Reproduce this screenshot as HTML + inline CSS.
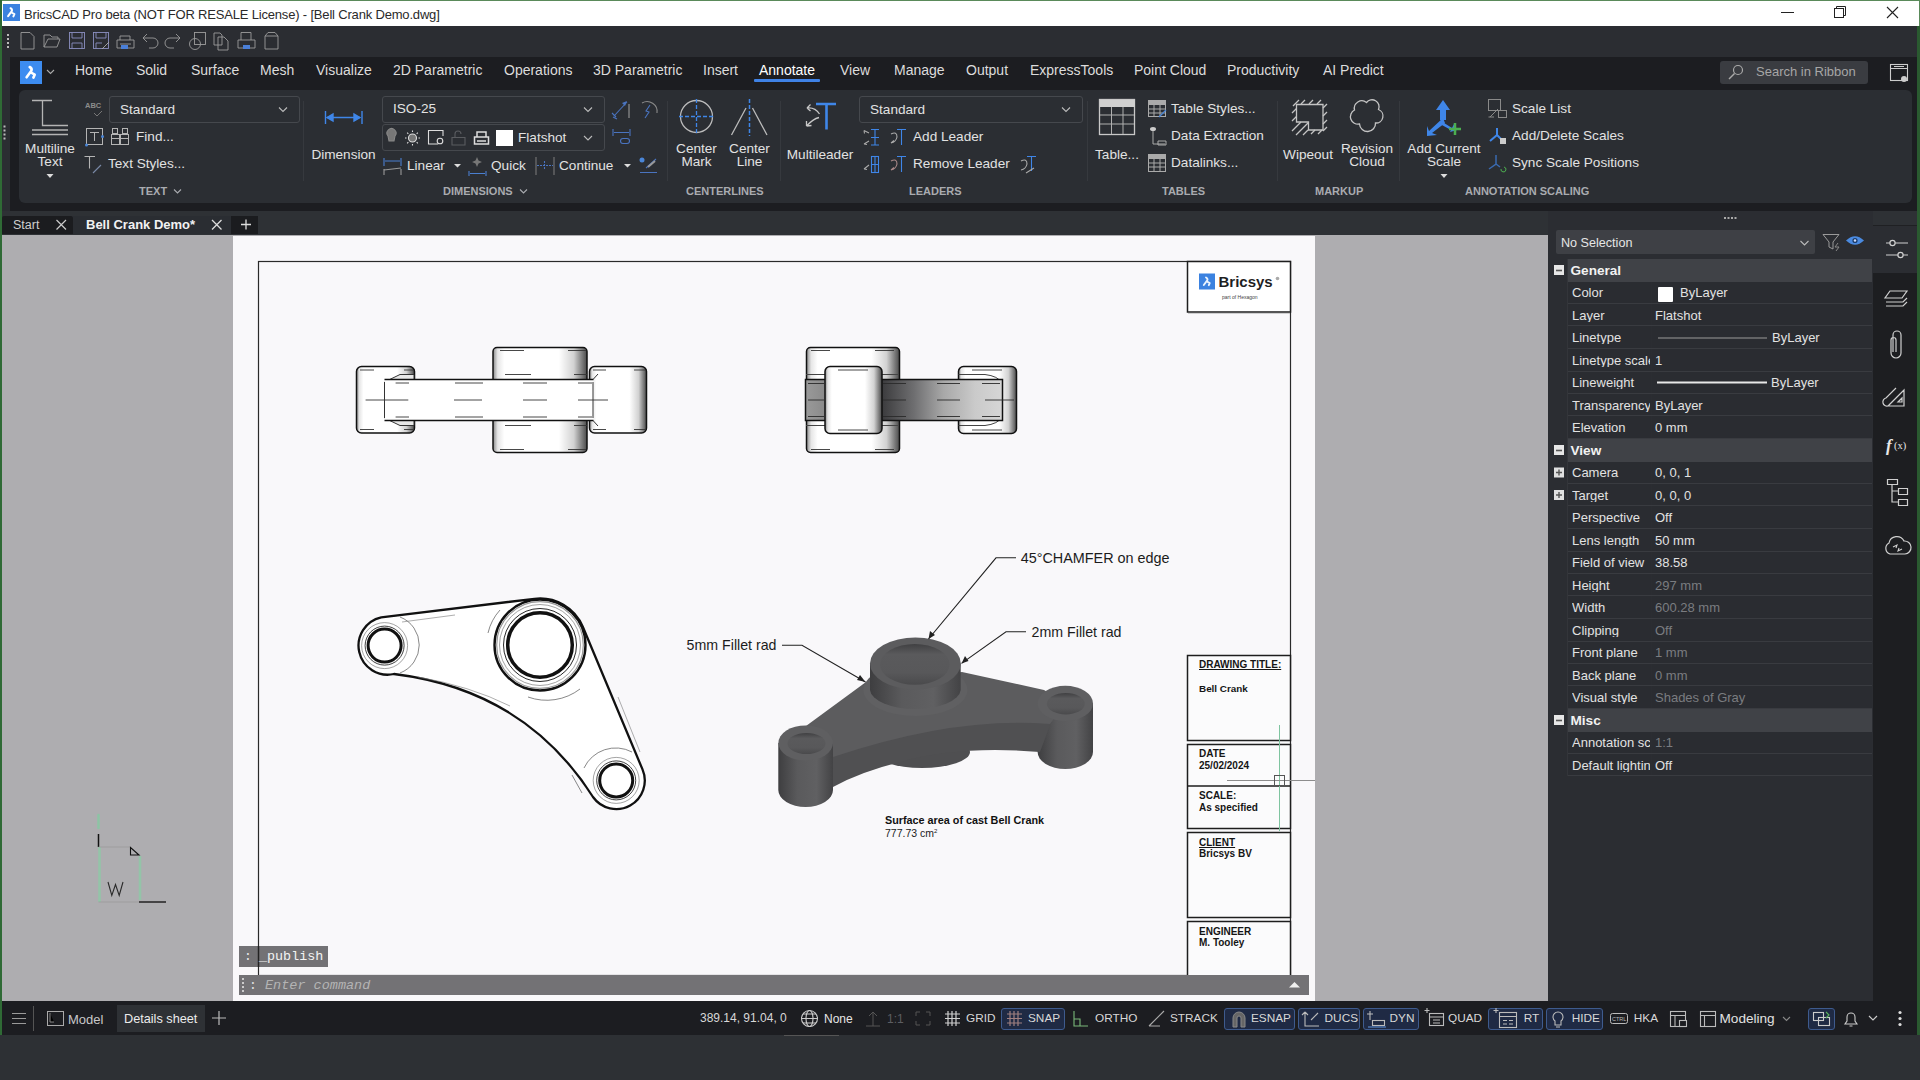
<!DOCTYPE html>
<html><head><meta charset="utf-8">
<style>
*{margin:0;padding:0;box-sizing:border-box}
html,body{width:1920px;height:1080px;overflow:hidden;background:#2b2e32;font-family:"Liberation Sans",sans-serif;color:#e6e6e6}
.a{position:absolute}
.t{position:absolute;white-space:nowrap;line-height:1}
svg{position:absolute;left:0;top:0}
</style></head><body>
<div class="a" style="left:0px;top:0px;width:1920px;height:26px;background:#ffffff;"></div>
<div class="a" style="left:0px;top:0px;width:1920px;height:1px;background:#5a8a5a;"></div>
<div class="a" style="left:0px;top:26px;width:1920px;height:31px;background:#2b2d32;"></div>
<div class="a" style="left:10px;top:57px;width:1910px;height:154px;background:#1c1d21;"></div>
<div class="a" style="left:0px;top:57px;width:10px;height:154px;background:#2b2d32;"></div>
<div class="a" style="left:19px;top:90px;width:1893px;height:113px;background:#2b2e33;border-radius:6px"></div>
<div class="a" style="left:0px;top:211px;width:1920px;height:24px;background:#2e3135;"></div>
<div class="a" style="left:0px;top:235px;width:1548px;height:766px;background:#aeadb0;"></div>
<div class="a" style="left:233px;top:236px;width:1082px;height:765px;background:#f9f8fa;"></div>
<div class="a" style="left:1548px;top:235px;width:327px;height:766px;background:#2b2d32;"></div>
<div class="a" style="left:1875px;top:273px;width:45px;height:728px;background:#1f2124;"></div>
<div class="a" style="left:0px;top:1001px;width:1920px;height:34px;background:#1c1d21;"></div>
<div class="a" style="left:0px;top:1035px;width:1920px;height:45px;background:#2d3034;"></div>
<div class="a" style="left:0px;top:0px;width:2px;height:1035px;background:#2f6a35;"></div>
<div class="a" style="left:20px;top:61px;width:22px;height:23px;background:#3d8cf0;"></div>
<div class="a" style="left:754px;top:79px;width:66px;height:3px;background:#3f82e6;border-radius:1px"></div>
<div class="a" style="left:1720px;top:61px;width:148px;height:23px;background:#3a3c41;border-radius:3px"></div>
<div class="a" style="left:303px;top:101px;width:1px;height:80px;background:#36393e;"></div>
<div class="a" style="left:667px;top:101px;width:1px;height:80px;background:#36393e;"></div>
<div class="a" style="left:780px;top:101px;width:1px;height:80px;background:#36393e;"></div>
<div class="a" style="left:1087px;top:101px;width:1px;height:80px;background:#36393e;"></div>
<div class="a" style="left:1277px;top:101px;width:1px;height:80px;background:#36393e;"></div>
<div class="a" style="left:1399px;top:101px;width:1px;height:80px;background:#36393e;"></div>
<div class="a" style="left:109px;top:96px;width:191px;height:27px;background:transparent;border:1px solid #45484d;border-radius:3px"></div>
<div class="a" style="left:382px;top:96px;width:223px;height:27px;background:transparent;border:1px solid #45484d;border-radius:3px"></div>
<div class="a" style="left:382px;top:124px;width:223px;height:27px;background:transparent;border:1px solid #45484d;border-radius:3px"></div>
<div class="a" style="left:496px;top:130px;width:17px;height:16px;background:#ffffff;"></div>
<div class="a" style="left:859px;top:96px;width:224px;height:27px;background:transparent;border:1px solid #45484d;border-radius:3px"></div>
<div class="a" style="left:2px;top:216px;width:71px;height:18px;background:#1b1c1f;border-radius:2px 2px 0 0"></div>
<div class="a" style="left:73px;top:216px;width:158px;height:18px;background:#2a2d32;"></div>
<div class="a" style="left:231px;top:216px;width:27px;height:18px;background:#1b1c1f;"></div>
<div class="a" style="left:239px;top:946px;width:89px;height:21px;background:#737275;"></div>
<div class="a" style="left:1548px;top:211px;width:325px;height:790px;background:#2b2d32;"></div>
<div class="a" style="left:1873px;top:211px;width:45px;height:62px;background:#2b2d32;"></div>
<div class="a" style="left:1873px;top:225px;width:45px;height:1px;background:#1f2023;"></div>
<div class="a" style="left:1873px;top:211px;width:45px;height:14px;background:#2e3135;"></div>
<div class="a" style="left:1873px;top:273px;width:45px;height:728px;background:#1d1e21;"></div>
<div class="a" style="left:1919px;top:0px;width:1px;height:26px;background:#5a8a5a;"></div>
<div class="a" style="left:1917px;top:26px;width:3px;height:1009px;background:#2a5a30;"></div>
<div class="a" style="left:1556px;top:230px;width:259px;height:24px;background:#3e4045;border-radius:2px"></div>
<div class="a" style="left:1567px;top:259px;width:305px;height:23px;background:#404247;"></div>
<div class="a" style="left:1567px;top:282px;width:84px;height:21px;background:#2a2c31;"></div>
<div class="a" style="left:1652px;top:282px;width:220px;height:21px;background:#2a2c31;"></div>
<div class="a" style="left:1567px;top:303px;width:305px;height:1px;background:#393b40;"></div>
<div class="a" style="left:1658px;top:287px;width:15px;height:15px;background:#ffffff;border-radius:1px"></div>
<div class="a" style="left:1567px;top:304px;width:84px;height:21px;background:#2a2c31;"></div>
<div class="a" style="left:1652px;top:304px;width:220px;height:21px;background:#2a2c31;"></div>
<div class="a" style="left:1567px;top:325px;width:305px;height:1px;background:#393b40;"></div>
<div class="a" style="left:1567px;top:326px;width:84px;height:22px;background:#2a2c31;"></div>
<div class="a" style="left:1652px;top:326px;width:220px;height:22px;background:#2a2c31;"></div>
<div class="a" style="left:1567px;top:348px;width:305px;height:1px;background:#393b40;"></div>
<div class="a" style="left:1567px;top:349px;width:84px;height:22px;background:#2a2c31;"></div>
<div class="a" style="left:1652px;top:349px;width:220px;height:22px;background:#2a2c31;"></div>
<div class="a" style="left:1567px;top:371px;width:305px;height:1px;background:#393b40;"></div>
<div class="a" style="left:1567px;top:372px;width:84px;height:21px;background:#2a2c31;"></div>
<div class="a" style="left:1652px;top:372px;width:220px;height:21px;background:#2a2c31;"></div>
<div class="a" style="left:1567px;top:393px;width:305px;height:1px;background:#393b40;"></div>
<div class="a" style="left:1567px;top:394px;width:84px;height:21px;background:#2a2c31;"></div>
<div class="a" style="left:1652px;top:394px;width:220px;height:21px;background:#2a2c31;"></div>
<div class="a" style="left:1567px;top:415px;width:305px;height:1px;background:#393b40;"></div>
<div class="a" style="left:1567px;top:416px;width:84px;height:22px;background:#2a2c31;"></div>
<div class="a" style="left:1652px;top:416px;width:220px;height:22px;background:#2a2c31;"></div>
<div class="a" style="left:1567px;top:438px;width:305px;height:1px;background:#393b40;"></div>
<div class="a" style="left:1567px;top:439px;width:305px;height:23px;background:#404247;"></div>
<div class="a" style="left:1567px;top:462px;width:84px;height:21px;background:#2a2c31;"></div>
<div class="a" style="left:1652px;top:462px;width:220px;height:21px;background:#2a2c31;"></div>
<div class="a" style="left:1567px;top:483px;width:305px;height:1px;background:#393b40;"></div>
<div class="a" style="left:1567px;top:484px;width:84px;height:21px;background:#2a2c31;"></div>
<div class="a" style="left:1652px;top:484px;width:220px;height:21px;background:#2a2c31;"></div>
<div class="a" style="left:1567px;top:505px;width:305px;height:1px;background:#393b40;"></div>
<div class="a" style="left:1567px;top:506px;width:84px;height:22px;background:#2a2c31;"></div>
<div class="a" style="left:1652px;top:506px;width:220px;height:22px;background:#2a2c31;"></div>
<div class="a" style="left:1567px;top:528px;width:305px;height:1px;background:#393b40;"></div>
<div class="a" style="left:1567px;top:529px;width:84px;height:22px;background:#2a2c31;"></div>
<div class="a" style="left:1652px;top:529px;width:220px;height:22px;background:#2a2c31;"></div>
<div class="a" style="left:1567px;top:551px;width:305px;height:1px;background:#393b40;"></div>
<div class="a" style="left:1567px;top:552px;width:84px;height:21px;background:#2a2c31;"></div>
<div class="a" style="left:1652px;top:552px;width:220px;height:21px;background:#2a2c31;"></div>
<div class="a" style="left:1567px;top:573px;width:305px;height:1px;background:#393b40;"></div>
<div class="a" style="left:1567px;top:574px;width:84px;height:21px;background:#2a2c31;"></div>
<div class="a" style="left:1652px;top:574px;width:220px;height:21px;background:#2a2c31;"></div>
<div class="a" style="left:1567px;top:595px;width:305px;height:1px;background:#393b40;"></div>
<div class="a" style="left:1567px;top:596px;width:84px;height:22px;background:#2a2c31;"></div>
<div class="a" style="left:1652px;top:596px;width:220px;height:22px;background:#2a2c31;"></div>
<div class="a" style="left:1567px;top:618px;width:305px;height:1px;background:#393b40;"></div>
<div class="a" style="left:1567px;top:619px;width:84px;height:22px;background:#2a2c31;"></div>
<div class="a" style="left:1652px;top:619px;width:220px;height:22px;background:#2a2c31;"></div>
<div class="a" style="left:1567px;top:641px;width:305px;height:1px;background:#393b40;"></div>
<div class="a" style="left:1567px;top:642px;width:84px;height:21px;background:#2a2c31;"></div>
<div class="a" style="left:1652px;top:642px;width:220px;height:21px;background:#2a2c31;"></div>
<div class="a" style="left:1567px;top:663px;width:305px;height:1px;background:#393b40;"></div>
<div class="a" style="left:1567px;top:664px;width:84px;height:21px;background:#2a2c31;"></div>
<div class="a" style="left:1652px;top:664px;width:220px;height:21px;background:#2a2c31;"></div>
<div class="a" style="left:1567px;top:685px;width:305px;height:1px;background:#393b40;"></div>
<div class="a" style="left:1567px;top:686px;width:84px;height:22px;background:#2a2c31;"></div>
<div class="a" style="left:1652px;top:686px;width:220px;height:22px;background:#2a2c31;"></div>
<div class="a" style="left:1567px;top:708px;width:305px;height:1px;background:#393b40;"></div>
<div class="a" style="left:1567px;top:709px;width:305px;height:23px;background:#404247;"></div>
<div class="a" style="left:1567px;top:732px;width:84px;height:21px;background:#2a2c31;"></div>
<div class="a" style="left:1652px;top:732px;width:220px;height:21px;background:#2a2c31;"></div>
<div class="a" style="left:1567px;top:753px;width:305px;height:1px;background:#393b40;"></div>
<div class="a" style="left:1567px;top:754px;width:84px;height:21px;background:#2a2c31;"></div>
<div class="a" style="left:1652px;top:754px;width:220px;height:21px;background:#2a2c31;"></div>
<div class="a" style="left:1567px;top:775px;width:305px;height:1px;background:#393b40;"></div>
<div class="a" style="left:1567px;top:259px;width:1px;height:517px;background:#33353a;"></div>
<div class="a" style="left:117px;top:1005px;width:88px;height:27px;background:#2e3135;"></div>
<div class="a" style="left:784px;top:1035px;width:55px;height:1px;background:#555;"></div>
<div class="a" style="left:1001px;top:1008px;width:64px;height:22px;background:#1f2a44;border:1px solid #3e5b8e;border-radius:3px"></div>
<div class="a" style="left:1224px;top:1008px;width:71px;height:22px;background:#1f2a44;border:1px solid #3e5b8e;border-radius:3px"></div>
<div class="a" style="left:1298px;top:1008px;width:62px;height:22px;background:#1f2a44;border:1px solid #3e5b8e;border-radius:3px"></div>
<div class="a" style="left:1363px;top:1008px;width:56px;height:22px;background:#1f2a44;border:1px solid #3e5b8e;border-radius:3px"></div>
<div class="a" style="left:1488px;top:1008px;width:55px;height:22px;background:#1f2a44;border:1px solid #3e5b8e;border-radius:3px"></div>
<div class="a" style="left:1546px;top:1008px;width:57px;height:22px;background:#1f2a44;border:1px solid #3e5b8e;border-radius:3px"></div>
<div class="a" style="left:1808px;top:1008px;width:27px;height:22px;background:#1f2a44;border:1px solid #3e5b8e;border-radius:3px"></div>
<svg width="1920" height="1080" viewBox="0 0 1920 1080">
<rect x="3" y="4" width="17" height="17" fill="#3b82e0"/>
<path d="M10.5 8.2 Q12.5 9.3 11.8 11.1 L8.1 16.2 M11.5 12.5 L14.4 14.2 L13.4 16.4" stroke="#fff" stroke-width="2.0" stroke-linecap="round" stroke-linejoin="round" fill="none"/>
<path d="M1781 12.5 H1794" stroke="#222" stroke-width="1"/>
<rect x="1834.5" y="8.5" width="9" height="9" fill="none" stroke="#222"/><path d="M1836.5 8.5 V6.5 H1845.5 V15.5 H1843.5" fill="none" stroke="#222"/>
<path d="M1887 7 L1898 18 M1898 7 L1887 18" stroke="#222" stroke-width="1.1"/>
<rect x="3.5" y="125.5" width="2" height="2" fill="#bbb"/>
<rect x="3.5" y="129.5" width="2" height="2" fill="#bbb"/>
<rect x="3.5" y="133.5" width="2" height="2" fill="#bbb"/>
<rect x="3.5" y="137.5" width="2" height="2" fill="#bbb"/>
<rect x="7" y="34" width="2" height="2" fill="#bbb"/>
<rect x="7" y="38" width="2" height="2" fill="#bbb"/>
<rect x="7" y="42" width="2" height="2" fill="#bbb"/>
<rect x="7" y="46" width="2" height="2" fill="#bbb"/>
<g fill="none" stroke="#9c9c9c" stroke-width="0.9"><path d="M21 32.5 H30 L34 36.5 V49 H21 Z"/><path d="M44 35 H50 L52 37 H58 V39 M44 35 V47 H57 L60 39 H48 L44 47"/><rect x="69.5" y="32.5" width="15" height="16" stroke="#8a8fc0"/><path d="M72 32.5 V38 H82 V32.5 M72 48.5 V43 H82 V48.5" stroke="#8a8fc0"/><rect x="93.5" y="32.5" width="15" height="16" stroke="#8a8fc0"/><path d="M96 32.5 V38 H106 V32.5 M96 48.5 V43 H102" stroke="#8a8fc0"/><path d="M102 49 L109 42" stroke="#aaa"/><path d="M120 40 V36 H130 V40 M117 48 V40 H134 V48 Z M120 44 H131"/><path d="M143 38 H153 A5 5 0 0 1 153 48 H149 M147 34 L143 38 L147 42"/><path d="M180 38 H170 A5 5 0 0 0 170 48 H174 M176 34 L180 38 L176 42"/><rect x="194.5" y="32.5" width="11" height="12"/><circle cx="195" cy="44" r="5.5"/><path d="M214 33 H220 L222 35 V45 H214 Z M218 37 H224 L228 41 V50 H218 Z"/><path d="M241 40 V32.5 H251 V40 M238 48 V40 H255 V48 Z"/><path d="M265 36 L268 32.5 H275 L278 36 V49 H265 Z M265 36 H278"/></g>
<rect x="243" y="45" width="7" height="4" fill="#4a7fd8"/><rect x="121" y="45" width="7" height="4" fill="#4a7fd8"/>
<path d="M29.7 67.0 Q32.3 68.3 31.4 70.7 L26.6 77.3 M31.0 72.5 L34.7 74.7 L33.4 77.6" stroke="#fff" stroke-width="2.6" stroke-linecap="round" stroke-linejoin="round" fill="none"/>
<path d="M47 70 L50.5 73.5 L54 70" stroke="#aaa" stroke-width="1.1" fill="none"/>
<circle cx="1738" cy="70" r="4.5" fill="none" stroke="#aaa" stroke-width="1.2"/><path d="M1734.5 73.5 L1729 79" stroke="#aaa" stroke-width="1.4"/>
<g fill="none" stroke="#ccc" stroke-width="1.1"><rect x="1890.5" y="64.5" width="17" height="16"/><path d="M1890.5 68.5 H1907.5 M1894 66.5 H1904"/></g><circle cx="1904" cy="79" r="3" fill="#ccc"/>
<path d="M174 189.5 L177.5 193 L181 189.5 M520 189.5 L523.5 193 L527 189.5" stroke="#a9abb0" stroke-width="1.1" fill="none"/>
<g stroke="#b4b4b4" stroke-width="1.3" fill="none"><path d="M32 100.5 H52 M42.5 100.5 V125.5 H68 M32 130 H68 M32 134.5 H68"/></g>
<path d="M46.5 174 L53.5 174 L50 178 Z" fill="#ddd"/>
<path d="M94 113 L97 116 L102 111" stroke="#777" fill="none" stroke-width="1"/>
<path d="M279 107.5 L283 111.5 L287 107.5" stroke="#bbb" stroke-width="1.1" fill="none"/>
<g stroke="#b4b4b4" stroke-width="1" fill="none"><rect x="86.5" y="128.5" width="16" height="16"/><path d="M90 132.5 H99 M94.5 132.5 V141"/></g><circle cx="86.5" cy="145" r="1.5" fill="#4a86d8"/><circle cx="102.5" cy="136.5" r="1.5" fill="#4a86d8"/>
<g stroke="#b4b4b4" stroke-width="1" fill="none"><rect x="112.5" y="128.5" width="5" height="5"/><rect x="122.5" y="128.5" width="5" height="5"/><rect x="111.5" y="134.5" width="8" height="10"/><rect x="120.5" y="134.5" width="8" height="10"/><path d="M111.5 138.5 H128.5"/></g>
<g stroke="#b4b4b4" stroke-width="1.1" fill="none"><path d="M84.5 156.5 H95 M89.5 156.5 V168.5"/><path d="M93 173 L101 165" stroke="#7a8aa8"/></g>
<g stroke="#3f86e8" stroke-width="1.4" fill="none"><path d="M325.5 111 V124 M362 111 V124 M327 117.5 H360"/><path d="M327 117.5 L333 114 V121 Z M360 117.5 L354 114 V121 Z" fill="#3f86e8"/></g>
<path d="M584 107.5 L588 111.5 L592 107.5" stroke="#bbb" stroke-width="1.1" fill="none"/>
<path d="M584 136 L588 140 L592 136" stroke="#bbb" stroke-width="1.1" fill="none"/>
<g fill="none" stroke-width="1.1"><path d="M388 136 A4.5 4.5 0 1 1 395 136 L394 141 H389 Z" fill="#777" stroke="#888"/><circle cx="412.5" cy="138" r="4" fill="#777" stroke="#ddd"/><path d="M412.5 130.5 V132 M412.5 144 V145.5 M405 138 H406.5 M418.5 138 H420 M407.2 132.7 L408.3 133.8 M416.7 142.2 L417.8 143.3 M417.8 132.7 L416.7 133.8 M408.3 142.2 L407.2 143.3" stroke="#ddd"/><path d="M438 144 H428.5 V130.5 H443 V136" stroke="#ddd"/><circle cx="440" cy="141" r="2.8" stroke="#ddd"/><path d="M452 137.5 H465 V145 H452 Z M455 137.5 V134 A3 3 0 0 1 461 134" stroke="#5a5c60"/><path d="M477 137 V132 H486 V137 M474.5 144 V137 H488.5 V144 Z M477 141 H486" stroke="#ddd" stroke-width="1.5"/></g>
<g fill="none" stroke-width="1.1"><path d="M384 158 V166 M401 158 V166 M385 161 H400" stroke="#4a7fd0"/><path d="M384 169 V175 M401 169 V175 M384 170 L401 168" stroke="#999"/><path d="M454 164 H461 L457.5 167.5 Z M624 164 H631 L627.5 167.5 Z" fill="#ddd" stroke="none"/><path d="M469 171 V176 M486 171 V176 M470 173.5 H485" stroke="#4a7fd0"/><path d="M477 157 L478.5 160.5 L482 162 L478.5 163.5 L477 167 L475.5 163.5 L472 162 L475.5 160.5 Z" fill="#777" stroke="none"/><path d="M536 157 V175 M554 157 V175" stroke="#777"/><path d="M544.5 161 V170 M537 165.5 H553" stroke="#4a74c0" stroke-dasharray="2 1"/><path d="M614 116 L627 102" stroke="#4a74c0"/><path d="M629 104 V118" stroke="#9a9a9a"/><path d="M613 117 L617 119 M612 113 L616 117" stroke="#4a74c0"/><path d="M627 101 L622 103 L625 106 Z" fill="#4a74c0" stroke="none"/><path d="M642 103 A10 10 0 0 1 657 113" stroke="#8a8a8a"/><path d="M645 118 L649 112 L646 111 L650 105" stroke="#4a74c0"/><path d="M613 129 V136 M630 129 V136 M614 132.5 H629" stroke="#4a74c0"/><rect x="620.5" y="138.5" width="9" height="5" rx="2.5" stroke="#4a74c0"/><path d="M640 172.5 H657 M646 168 L656 159" stroke="#4a74c0"/><path d="M648 167 L655 161" stroke="#999" stroke-width="2"/><circle cx="642" cy="160" r="2.5" fill="#4a86d8" stroke="none"/></g>
<circle cx="696.5" cy="116.5" r="16" fill="none" stroke="#bbb" stroke-width="1.3"/><path d="M679 116.5 H714 M696.5 99 V134" stroke="#3f86e8" stroke-width="1.3" stroke-dasharray="4 2" fill="none"/><path d="M731.5 135 L746 108 M767 135 L752.5 108" stroke="#bbb" stroke-width="1.3" fill="none"/><path d="M749.5 99 V136" stroke="#3f86e8" stroke-width="1.5" stroke-dasharray="4 2"/>
<g fill="none"><path d="M816 104 H836 M826.5 104 V129.5" stroke="#3f86e8" stroke-width="2.6"/><path d="M819.5 114 Q815 107 807 108 M807 108 L810.5 104.5 M807 108 L810.5 111" stroke="#c8c8c8" stroke-width="1.3"/><path d="M819 117.5 Q813 119 806.5 126 M806.5 126 L806.5 121 M806.5 126 L811.5 125.5" stroke="#c8c8c8" stroke-width="1.3"/></g>
<path d="M1062 107.5 L1066 111.5 L1070 107.5" stroke="#bbb" stroke-width="1.1" fill="none"/>
<g fill="none" stroke-width="1.1"><path d="M871 129.5 H879 M875 129.5 V145 M871 145 H879 M871 137.5 H879" stroke="#3f86e8"/><path d="M869 133 L864 130.5 M864 130.5 L864.5 133.5 M869 141 L864 144 M864 144 L867 144.5" stroke="#aaa"/><path d="M897 129.5 H906 M901.5 129.5 V145" stroke="#3f86e8"/><path d="M891 134 Q897 131 897 137 Q896 142 891 143 M891 143 L894 140.5" stroke="#aaa"/><rect x="871.5" y="156.5" width="7" height="16" stroke="#3f86e8"/><path d="M875 156.5 V172.5 M871.5 164.5 H878.5" stroke="#3f86e8"/><path d="M869 165 L864 169 M864 169 L867 169.5" stroke="#aaa"/><path d="M897 156.5 H906 M901.5 156.5 V172" stroke="#3f86e8"/><path d="M891 161 Q897 158 897 164 Q896 169 891 170 M891 170 L894 167.5" stroke="#a88"/><path d="M1027 156.5 H1036 M1031.5 156.5 V171" stroke="#3f86e8"/><path d="M1021 161 Q1027 158 1027 164 Q1026 169 1021 170 M1026 173 L1034 168" stroke="#aaa"/></g>
<g fill="none" stroke="#c8c8c8" stroke-width="1.3"><rect x="1099.5" y="99.5" width="35" height="35"/></g><g stroke="#b0b0b0" stroke-width="1"><path d="M1100 115 H1134 M1100 124 H1134 M1111.5 107 V134 M1123 107 V134"/></g><rect x="1100" y="100" width="35" height="7" fill="#d0d0d0"/>
<g fill="none" stroke="#aaa" stroke-width="1"><rect x="1148.5" y="100.5" width="17" height="16"/><path d="M1148.5 104.5 H1165.5 M1148.5 109 H1165.5 M1148.5 113 H1165.5 M1154 104.5 V116.5 M1160 104.5 V116.5"/><path d="M1153 130 V144 H1165 M1158 141 H1166 V145 H1158 Z"/><rect x="1148.5" y="154.5" width="17" height="17"/><path d="M1148.5 158.5 H1165.5 M1148.5 163 H1165.5 M1148.5 167 H1165.5 M1154 158.5 V171.5 M1160 158.5 V171.5"/></g><rect x="1149" y="101" width="17" height="3" fill="#aaa"/><rect x="1149" y="155" width="17" height="3" fill="#aaa"/><path d="M1159 117 L1166 110" stroke="#4a86d8" stroke-width="1.2"/><ellipse cx="1153" cy="129" rx="3" ry="2" fill="#ccc"/>
<g fill="none" stroke="#c4c4c4" stroke-width="1.3"><path d="M1296.5 104.5 H1323 V130 H1308.5 V122 H1296.5 Z"/><path d="M1293 106 L1299 100 M1301 104 L1305 100 M1309 104 L1313 100 M1317 104 L1321 100 M1323 108 L1327 104 M1323 116 L1327 112 M1323 124 L1327 120 M1323 131 L1327 127 M1292 113 L1296.5 108.5 M1292 121 L1296.5 116.5 M1311 134 L1315 130 M1318 134 L1322 130 M1292 131 L1301 122 M1296 135 L1308.5 122.5 M1303 135 L1308 130"/></g>
<path transform="translate(-1.5,-2.5)" d="M1356 112.5 A7.5 7.5 0 0 1 1368 105 A7 7 0 0 1 1380 112 A7 7 0 0 1 1377 125.5 A8 8 0 0 1 1361 126.5 A7.5 7.5 0 0 1 1356 112.5 Z" fill="none" stroke="#c4c4c4" stroke-width="1.3"/>
<g fill="#3f86e8" stroke="none"><path d="M1443 100 L1450 110 H1446 V120 H1440 V110 H1436 Z"/><path d="M1443 118 L1429 131 L1427 126 L1427 136 L1437 135 L1432 133 L1445 123 Z"/><path d="M1441 121 L1452 128 L1454 124 L1457 130 L1450 132 L1451 130 L1440 124 Z"/></g><path d="M1455 123 V135 M1449 129 H1461" stroke="#4caf50" stroke-width="2.5"/>
<path d="M1440.5 174 L1447.5 174 L1444 178 Z" fill="#ddd"/>
<g fill="none" stroke="#8a8a8a" stroke-width="1"><rect x="1488.5" y="99.5" width="12" height="11"/><path d="M1490 117 L1498 109 M1494 117 H1488.5"/><rect x="1498.5" y="110.5" width="8" height="7"/></g><path d="M1497 128 V135 L1490 141 M1497 135 L1502 140" stroke="#3f86e8" stroke-width="2" fill="none"/><rect x="1500" y="138" width="6" height="6" fill="#ccc"/><path d="M1496 155 V164 L1489 169 M1496 164 L1500 167" stroke="#3a6ab0" stroke-width="1.5" fill="none"/><path d="M1501 169 A2.5 2.5 0 1 0 1504 167" stroke="#4caf50" fill="none"/>
<path d="M56.5 220 L66 229.5 M66 220 L56.5 229.5" stroke="#ccc" stroke-width="1.2"/>
<path d="M212 220 L221.5 229.5 M221.5 220 L212 229.5" stroke="#ddd" stroke-width="1.3"/>
<path d="M241 224.5 H251 M246 219.5 V229.5" stroke="#ddd" stroke-width="1.3"/>
<rect x="1724" y="217" width="2" height="2" fill="#aaa"/>
<rect x="1727.5" y="217" width="2" height="2" fill="#aaa"/>
<rect x="1731" y="217" width="2" height="2" fill="#aaa"/>
<rect x="1734.5" y="217" width="2" height="2" fill="#aaa"/>
<rect x="258.5" y="261.5" width="1032" height="714" fill="none" stroke="#2a2a2a" stroke-width="1.2"/>
<rect x="1187.5" y="261.5" width="103" height="50.5" fill="#ffffff" stroke="#1e1e1e" stroke-width="1.5"/><path d="M1188 312.5 H1290" stroke="#555" stroke-width="1.5"/>
<rect x="1199" y="273.5" width="16" height="16" fill="#3b82e0"/>
<path d="M1206.0 277.5 Q1208.0 278.5 1207.3 280.2 L1203.8 285.0 M1207.0 281.5 L1209.7 283.1 L1208.8 285.2" stroke="#eaf4ff" stroke-width="1.9" stroke-linecap="round" stroke-linejoin="round" fill="none"/>
<circle cx="1277.5" cy="278.5" r="1.8" fill="#aaa"/>
<rect x="1187.5" y="655.5" width="103" height="85" fill="#fbfbfc" stroke="#1e1e1e" stroke-width="1.5"/>
<rect x="1187.5" y="744.5" width="103" height="84" fill="#fbfbfc" stroke="#1e1e1e" stroke-width="1.5"/>
<rect x="1187.5" y="832.5" width="103" height="85" fill="#fbfbfc" stroke="#1e1e1e" stroke-width="1.5"/>
<rect x="1187.5" y="921.5" width="103" height="59" fill="#fbfbfc" stroke="#1e1e1e" stroke-width="1.5"/>
<path d="M1188 786 H1290" stroke="#1e1e1e" stroke-width="1.3"/>
<path d="M1279.5 725 V831" stroke="#7fc4a0" stroke-width="1"/><path d="M1227 780.5 H1315" stroke="#8d8d8d" stroke-width="1"/><rect x="1274.5" y="775.5" width="10" height="10" fill="none" stroke="#555" stroke-width="1"/>
<defs><linearGradient id="cylH" x1="0" x2="1" y1="0" y2="0"><stop offset="0" stop-color="#8a8a8a"/><stop offset="0.05" stop-color="#e6e6e6"/><stop offset="0.12" stop-color="#ffffff"/><stop offset="0.7" stop-color="#ffffff"/><stop offset="0.86" stop-color="#d2d2d2"/><stop offset="0.95" stop-color="#7a7a7a"/><stop offset="1" stop-color="#4a4a4a"/></linearGradient><linearGradient id="barD" x1="0" x2="1" y1="0" y2="0"><stop offset="0" stop-color="#9a9a9a"/><stop offset="0.1" stop-color="#8a8a8a"/><stop offset="0.39" stop-color="#3c3c3e"/><stop offset="0.55" stop-color="#6e6e70"/><stop offset="0.7" stop-color="#a8a8a8"/><stop offset="0.86" stop-color="#cacaca"/><stop offset="1" stop-color="#d6d6d6"/></linearGradient><linearGradient id="holeG" x1="0" x2="0" y1="0" y2="1"><stop offset="0" stop-color="#404042"/><stop offset="0.25" stop-color="#5a5a5c"/><stop offset="0.7" stop-color="#58585a"/><stop offset="1" stop-color="#4a4a4c"/></linearGradient><linearGradient id="cylD" x1="0" x2="1" y1="0" y2="0"><stop offset="0" stop-color="#3e3e40"/><stop offset="0.35" stop-color="#5a5a5c"/><stop offset="0.7" stop-color="#606062"/><stop offset="1" stop-color="#434345"/></linearGradient></defs>
<g stroke="#111" stroke-width="1.5"><rect x="493" y="347.5" width="94" height="105" rx="4" fill="url(#cylH)"/><rect x="356.5" y="366.5" width="58" height="66.5" rx="5" fill="url(#cylH)"/><rect x="589.5" y="366.5" width="57" height="66.5" rx="5" fill="url(#cylH)"/></g><path d="M384.5 382 L400 374.5 H414 V379.5 M384.5 418 L400 425.5 H414 V420.5" fill="#e8e8e8" stroke="#333" stroke-width="1"/><path d="M593 379.5 L598 374 M593 420.5 L598 426" stroke="#333" stroke-width="1"/><path d="M384.5 379.5 H593.5 V420.5 H384.5 Z" fill="#ffffff" stroke="none"/><path d="M384.5 379.5 H593.5 M384.5 420.5 H593.5" stroke="#111" stroke-width="1.6"/><path d="M384.5 382 V418 M593 382 V418" stroke="#333" stroke-width="1"/>
<g stroke="#333" stroke-width="0.9" fill="none"><path d="M365.6 400 H408.3 M454 400 H482 M523 400 H547 M578 400 H608"/><path d="M395.6 383 H409 M455 383 H483 M523 383 H547 M578 383 H592 M395.6 417 H409 M455 417 H483 M523 417 H547 M578 417 H592"/><path d="M500 350.5 H524 M568 350.5 H586 M505 374.5 H531 M574 374.5 H587 M505 425.5 H531 M574 425.5 H587 M500 449.5 H524 M568 449.5 H586"/><path d="M360 370 H374 M404 370 H413 M360 429.5 H374 M404 429.5 H413 M593 370 H606 M634 370 H645 M593 429.5 H606 M634 429.5 H645"/></g>
<g stroke="#111" stroke-width="1.5"><rect x="806.5" y="347.5" width="93" height="105" rx="4" fill="url(#cylH)"/><rect x="958.5" y="366.5" width="58" height="67" rx="5" fill="url(#cylH)"/></g><path d="M806 374.5 H826 M806 425.5 H826 M882 374.5 H899 M882 425.5 H899" stroke="#444" stroke-width="1"/><path d="M985 374.5 Q998 376 1002 383 M985 425.5 Q998 424 1002 417 M958.5 374.5 H985 M958.5 425.5 H985" fill="none" stroke="#444" stroke-width="1"/><rect x="805.5" y="379.5" width="197" height="41" fill="url(#barD)" stroke="#111" stroke-width="1.5"/><rect x="825" y="366.5" width="57" height="67" rx="5" fill="url(#cylH)" stroke="#111" stroke-width="1.5"/><g stroke="#2a2a2a" stroke-width="0.9" fill="none"><path d="M808 400 H824 M883 400 H906 M937 400 H960 M985 400 H1014 M808 383.5 H824 M883 383.5 H906 M937 383.5 H960 M982 383.5 H1000 M808 416.5 H824 M883 416.5 H906 M937 416.5 H960 M982 416.5 H1000"/></g><g stroke="#333" stroke-width="0.9"><path d="M811 350.5 H830 M875 350.5 H894 M811 449.5 H830 M875 449.5 H894 M838 370 H868 M838 430 H868 M972 370 H1002 M972 430 H1002"/></g>
<g fill="#ffffff" stroke="#111" stroke-width="2.3"><path d="M381.2 617.3 L534.4 598.8 A46.5 46.5 0 0 1 582.9 627 L642.5 769.4 A28.5 28.5 0 0 1 593 797 Q525 690 394 674 A28.5 28.5 0 1 1 381.2 617.3 Z"/></g><g fill="none" stroke="#111"><circle cx="384.6" cy="645.6" r="16.5" stroke-width="3"/><circle cx="384.6" cy="645.6" r="19.5" stroke-width="0.8"/><circle cx="384.6" cy="645.6" r="23" stroke-width="0.6" stroke="#666"/><circle cx="540" cy="645" r="32.3" stroke-width="3.5"/><circle cx="540" cy="645" r="36.5" stroke-width="0.9"/><circle cx="540" cy="645" r="40.5" stroke-width="0.6" stroke="#666"/><circle cx="540" cy="645" r="45.5" stroke-width="2.4"/><circle cx="540" cy="645" r="43.3" stroke-width="1.2" stroke="#999"/><circle cx="616.2" cy="780.4" r="16.5" stroke-width="3"/><circle cx="616.2" cy="780.4" r="19.5" stroke-width="0.8"/><circle cx="616.2" cy="780.4" r="23" stroke-width="0.6" stroke="#666"/><path d="M400 617 A30 30 0 0 1 400 673" stroke-width="0.7" stroke="#555"/><path d="M488 633 A52 52 0 0 1 500 610 M580 689 A55 55 0 0 1 528 697" stroke-width="0.7" stroke="#555"/><path d="M584 768 A35 35 0 0 1 632 752 M582 793 L572 775" stroke-width="0.7" stroke="#555"/><path d="M402 622 L455 615 M418 677 Q470 686 510 706 M618 697 L640 752" stroke-width="0.6" stroke="#777"/></g>
<g stroke="none"><ellipse cx="922" cy="752" rx="48" ry="16" fill="#4f4f51"/><path d="M1037.6 703.4 V752 A27.7 17 0 0 0 1093 752 V703.4 Z" fill="url(#cylD)"/><path d="M830 752 Q955 712 1052 720 L1040 752 Q960 745 900 762 Q860 772 833 787 Z" fill="#505052"/><path d="M806 726 L866 682 L962 672 L1044 690 L1066 703 L1050 724 Q955 716 833 757 L806 743 Z" fill="#5c5c5e"/><path d="M778.3 743 V790 A27.3 17 0 0 0 833 790 V743 Z" fill="url(#cylD)"/><ellipse cx="805.7" cy="743" rx="27.3" ry="17.6" fill="#5f5f61"/><ellipse cx="806.5" cy="743.5" rx="19" ry="10.5" fill="url(#holeG)"/><ellipse cx="1065.3" cy="703.4" rx="27.7" ry="17.6" fill="#5f5f61"/><ellipse cx="1065.8" cy="703.7" rx="19" ry="10.7" fill="url(#holeG)"/><ellipse cx="915.4" cy="690" rx="52" ry="26" fill="#606062"/><path d="M870 663.5 V690 A45.4 20 0 0 0 960.7 690 V663.5 Z" fill="url(#cylD)"/><ellipse cx="915.4" cy="663.5" rx="45.4" ry="26" fill="#5c5c5e"/><ellipse cx="914.8" cy="664.4" rx="34.8" ry="20.4" fill="url(#holeG)"/></g>
<g stroke="#222" stroke-width="1.1" fill="none"><path d="M1016 557.8 H996 L928.5 639"/><path d="M1026 631.8 H1006 L961.5 663.4"/><path d="M782 645.3 H802 L865.5 682"/></g><g fill="#222"><path d="M928.5 639 L930 631 L935 635 Z"/><path d="M961.5 663.4 L965 656 L968.5 661 Z"/><path d="M865.5 682 L857 680 L860 675 Z"/></g>
<g fill="none"><path d="M98.5 815 V828" stroke="#8cc4a4" stroke-width="2.5" stroke-linecap="round"/><path d="M98.5 834 V847" stroke="#111" stroke-width="1.5"/><path d="M99.5 847 V902 M140 856 V900" stroke="#94c4a8" stroke-width="2.6"/><path d="M98.5 847 H130 M98.5 902 H139" stroke="#9a9a9a" stroke-width="0.7"/><path d="M139 902 H166" stroke="#222" stroke-width="1.5"/><path d="M130.5 847.5 V855 H139 Z" stroke="#111" stroke-width="1.1"/></g>
<path d="M108 882 L111.8 895.5 L115.5 884.5 L119.2 895.5 L123 882" fill="none" stroke="#2a2a2a" stroke-width="1.1"/>
<path d="M258.5 946 V967" stroke="#222" stroke-width="1.3"/>
<path d="M1800.5 241 L1804.5 245 L1808.5 241" stroke="#bbb" stroke-width="1.1" fill="none"/>
<path d="M1823 234.5 H1839 L1833 242 V249 L1829 247 V242 Z" fill="none" stroke="#9a9a9a" stroke-width="1"/><path d="M1838 243 L1835 247 H1839 L1836 251" stroke="#888" stroke-width="1" fill="none"/>
<path d="M1846 240.5 Q1855 232 1864 240.5 Q1855 249 1846 240.5 Z" fill="#4a8ae0"/><circle cx="1855" cy="240.5" r="2.6" fill="#1d3c6a"/><circle cx="1855" cy="240.5" r="1.2" fill="#cfe0ff"/>
<g fill="none" stroke="#d0d0d0" stroke-width="1.2"><path d="M1886 243 H1908 M1886 255 H1908"/><circle cx="1892.5" cy="243" r="2.6" fill="#2b2d32"/><circle cx="1900.5" cy="255" r="2.6" fill="#2b2d32"/><path d="M1890 291 H1907 L1902 298 H1885 Z M1886 302 H1903 L1907 298 M1886 306 H1903 L1907 302"/><path d="M1893 352 V335 A4 4 0 0 1 1901 335 V353 A5 5 0 0 1 1891 353 V340 A2.5 2.5 0 0 1 1896 340 V352"/><path d="M1888 406 L1904 390 V406 Z M1898 402 L1902 398 V402 Z M1888 406 A4 4 0 0 1 1886 398 L1896 388"/><path d="M1887.5 479.5 H1897.5 V484.5 H1887.5 Z M1898.5 488.5 H1907.5 V494.5 H1898.5 Z M1898.5 499.5 H1907.5 V505.5 H1898.5 Z M1892 484.5 V502 H1898.5 M1892 491 H1898.5"/><path d="M1890 554 A6 6 0 0 1 1889 543 A8 8 0 0 1 1904 541 A6.5 6.5 0 0 1 1905 554 Z"/><path d="M1893 547 L1897 545 L1896 548 M1902 549 L1898 551 L1899 548" stroke-width="1.1"/></g>
<rect x="1554" y="265.0" width="10" height="10" fill="#e6e6e6"/><path d="M1556 270.5 H1562" stroke="#555" stroke-width="1.6"/>
<path d="M1658 338.0 H1767" stroke="#9a9a9a" stroke-width="1"/>
<path d="M1657 382.5 H1767" stroke="#e8e8e8" stroke-width="1.8"/>
<rect x="1554" y="445.0" width="10" height="10" fill="#e6e6e6"/><path d="M1556 450.5 H1562" stroke="#555" stroke-width="1.6"/>
<rect x="1554" y="467.5" width="10" height="10" fill="#e0e0e0"/><path d="M1556 472.5 H1562 M1559 469.5 V475.5" stroke="#555" stroke-width="1.4"/>
<rect x="1554" y="490.0" width="10" height="10" fill="#e0e0e0"/><path d="M1556 495.0 H1562 M1559 492.0 V498.0" stroke="#555" stroke-width="1.4"/>
<rect x="1554" y="715.0" width="10" height="10" fill="#e6e6e6"/><path d="M1556 720.5 H1562" stroke="#555" stroke-width="1.6"/>
<path d="M12 1013.5 H26 M12 1018.5 H26 M12 1023.5 H26" stroke="#9a9a9a" stroke-width="1.2"/><path d="M33.5 1006 V1031" stroke="#555" stroke-width="1"/>
<rect x="47.5" y="1011.5" width="16" height="14" fill="none" stroke="#aaa"/><path d="M50 1013 V1022 H54" stroke="#888"/>
<path d="M212 1018 H226 M219 1011 V1025" stroke="#bbb" stroke-width="1.2"/>
<g fill="none" stroke="#ccc" stroke-width="1.1"><circle cx="809.5" cy="1018.5" r="8"/><ellipse cx="809.5" cy="1018.5" rx="3.5" ry="8"/><path d="M801.5 1018.5 H817.5 M803 1014 H816 M803 1023 H816"/></g>
<g fill="none" stroke="#555" stroke-width="1"><path d="M866 1026 H880 M873 1026 V1012 M869 1016 L873 1012 L877 1016"/><path d="M916 1016 V1012 H920 M926 1012 H930 V1016 M930 1021 V1025 H926 M920 1025 H916 V1021"/></g>
<g stroke="#d0d0d0" stroke-width="1.2"><path d="M948 1011 V1026 M952 1011 V1026 M956 1011 V1026 M945 1014 H960 M945 1018.5 H960 M945 1023 H960"/></g>
<g stroke="#a08080" stroke-width="1.2"><path d="M1010 1011 V1026 M1014 1011 V1026 M1018 1011 V1026 M1007 1014 H1022 M1007 1018.5 H1022 M1007 1023 H1022"/></g>
<path d="M1074 1011 V1026 H1088 M1074 1019 H1080 V1026" stroke="#7ab87a" fill="none" stroke-width="1.1"/>
<path d="M1149 1026 L1164 1011 M1149 1026 H1160" stroke="#aaa" fill="none" stroke-width="1.1"/>
<path d="M1233 1027 V1018 A6 6 0 0 1 1245 1018 V1027 H1241 V1018 A2 2 0 0 0 1237 1018 V1027 Z" fill="#666" stroke="#888"/>
<g fill="none" stroke="#bbb" stroke-width="1.1"><path d="M1305 1012 V1026 H1319 M1305 1012 L1302 1015 M1305 1012 L1308 1015"/><path d="M1311 1020 L1318 1013"/></g>
<g fill="none" stroke="#bbb" stroke-width="1.1"><path d="M1370 1011 V1020 M1367 1014 H1373"/><rect x="1372.5" y="1020.5" width="12" height="5"/><path d="M1368 1027 H1386" stroke="#5a8ad0"/></g>
<g fill="none" stroke="#bbb" stroke-width="1.1"><rect x="1429.5" y="1013.5" width="14" height="12"/><path d="M1429.5 1017 H1443.5 M1433 1020 H1440 M1433 1023 H1440"/><path d="M1427 1008 V1013 M1424.5 1010.5 H1429.5"/></g>
<g fill="none" stroke="#bbb" stroke-width="1.1"><rect x="1499.5" y="1012.5" width="17" height="15"/><path d="M1499.5 1016.5 H1516.5 M1503 1020.5 H1507 M1509 1020.5 H1513 M1503 1024 H1507 M1509 1024 H1513 M1496 1008 V1013 M1493.5 1010.5 H1498.5"/></g>
<g fill="none" stroke="#bbb" stroke-width="1.1"><path d="M1555 1021 A5 5 0 1 1 1561 1021 V1025 H1555 Z M1556 1027 H1560"/></g>
<rect x="1610.5" y="1013.5" width="17" height="10" rx="2" fill="none" stroke="#bbb"/><text x="1612" y="1021" font-size="5.5" fill="#bbb" font-family="Liberation Sans">CTRL</text>
<g fill="none" stroke="#bbb" stroke-width="1.1"><rect x="1670.5" y="1011.5" width="15" height="15"/><path d="M1670.5 1015.5 H1685.5 M1675 1015.5 V1026.5"/><rect x="1679.5" y="1020.5" width="7" height="6" fill="#1c1d21"/></g>
<g fill="none" stroke="#bbb" stroke-width="1.1"><rect x="1700.5" y="1011.5" width="15" height="15"/><path d="M1700.5 1015.5 H1715.5 M1704.5 1015.5 V1026.5"/></g>
<path d="M1783 1017 L1786.5 1020.5 L1790 1017" stroke="#888" fill="none" stroke-width="1.1"/>
<g fill="none" stroke="#ccc" stroke-width="1.1"><rect x="1813.5" y="1012.5" width="10" height="8"/><rect x="1818.5" y="1017.5" width="11" height="8"/><path d="M1826 1012 L1829 1015 L1826 1018" stroke="#5ab35a"/></g>
<path d="M1845 1024 H1857 L1855 1021 V1017 A4 4 0 0 0 1847 1017 V1021 Z M1849.5 1026 H1852.5" fill="none" stroke="#ccc" stroke-width="1.1"/>
<path d="M1869 1016 L1873 1020 L1877 1016" stroke="#ccc" fill="none" stroke-width="1.2"/>
<circle cx="1900" cy="1012.5" r="1.6" fill="#ddd"/><circle cx="1900" cy="1018.5" r="1.6" fill="#ddd"/><circle cx="1900" cy="1024.5" r="1.6" fill="#ddd"/>
</svg>
<div class="t" style="left:24px;top:7.7px;font-size:13px;color:#2a2a2a;font-weight:400;font-family:'Liberation Sans';letter-spacing:-0.18px">BricsCAD Pro beta (NOT FOR RESALE License) - [Bell Crank Demo.dwg]</div>
<div class="t" style="left:75px;top:62.5px;font-size:14px;color:#dcdcdc;font-weight:400;font-family:'Liberation Sans';">Home</div>
<div class="t" style="left:136px;top:62.5px;font-size:14px;color:#dcdcdc;font-weight:400;font-family:'Liberation Sans';">Solid</div>
<div class="t" style="left:191px;top:62.5px;font-size:14px;color:#dcdcdc;font-weight:400;font-family:'Liberation Sans';">Surface</div>
<div class="t" style="left:260px;top:62.5px;font-size:14px;color:#dcdcdc;font-weight:400;font-family:'Liberation Sans';">Mesh</div>
<div class="t" style="left:316px;top:62.5px;font-size:14px;color:#dcdcdc;font-weight:400;font-family:'Liberation Sans';">Visualize</div>
<div class="t" style="left:393px;top:62.5px;font-size:14px;color:#dcdcdc;font-weight:400;font-family:'Liberation Sans';">2D Parametric</div>
<div class="t" style="left:504px;top:62.5px;font-size:14px;color:#dcdcdc;font-weight:400;font-family:'Liberation Sans';">Operations</div>
<div class="t" style="left:593px;top:62.5px;font-size:14px;color:#dcdcdc;font-weight:400;font-family:'Liberation Sans';">3D Parametric</div>
<div class="t" style="left:703px;top:62.5px;font-size:14px;color:#dcdcdc;font-weight:400;font-family:'Liberation Sans';">Insert</div>
<div class="t" style="left:759px;top:62.5px;font-size:14px;color:#ffffff;font-weight:400;font-family:'Liberation Sans';">Annotate</div>
<div class="t" style="left:840px;top:62.5px;font-size:14px;color:#dcdcdc;font-weight:400;font-family:'Liberation Sans';">View</div>
<div class="t" style="left:894px;top:62.5px;font-size:14px;color:#dcdcdc;font-weight:400;font-family:'Liberation Sans';">Manage</div>
<div class="t" style="left:966px;top:62.5px;font-size:14px;color:#dcdcdc;font-weight:400;font-family:'Liberation Sans';">Output</div>
<div class="t" style="left:1030px;top:62.5px;font-size:14px;color:#dcdcdc;font-weight:400;font-family:'Liberation Sans';">ExpressTools</div>
<div class="t" style="left:1134px;top:62.5px;font-size:14px;color:#dcdcdc;font-weight:400;font-family:'Liberation Sans';">Point Cloud</div>
<div class="t" style="left:1227px;top:62.5px;font-size:14px;color:#dcdcdc;font-weight:400;font-family:'Liberation Sans';">Productivity</div>
<div class="t" style="left:1323px;top:62.5px;font-size:14px;color:#dcdcdc;font-weight:400;font-family:'Liberation Sans';">AI Predict</div>
<div class="t" style="left:1756px;top:64.6px;font-size:13px;color:#a6a6a6;font-weight:400;font-family:'Liberation Sans';">Search in Ribbon</div>
<div class="t" style="left:139px;top:186.2px;font-size:11px;color:#a9abb0;font-weight:700;font-family:'Liberation Sans';">TEXT</div>
<div class="t" style="left:443px;top:186.2px;font-size:11px;color:#a9abb0;font-weight:700;font-family:'Liberation Sans';">DIMENSIONS</div>
<div class="t" style="left:686px;top:186.2px;font-size:11px;color:#a9abb0;font-weight:700;font-family:'Liberation Sans';">CENTERLINES</div>
<div class="t" style="left:909px;top:186.2px;font-size:11px;color:#a9abb0;font-weight:700;font-family:'Liberation Sans';">LEADERS</div>
<div class="t" style="left:1162px;top:186.2px;font-size:11px;color:#a9abb0;font-weight:700;font-family:'Liberation Sans';">TABLES</div>
<div class="t" style="left:1315px;top:186.2px;font-size:11px;color:#a9abb0;font-weight:700;font-family:'Liberation Sans';">MARKUP</div>
<div class="t" style="left:1465px;top:186.2px;font-size:11px;color:#a9abb0;font-weight:700;font-family:'Liberation Sans';">ANNOTATION SCALING</div>
<div class="t" style="left:-250px;width:600px;text-align:center;top:141.9px;font-size:13.6px;color:#e2e2e2;font-weight:400;font-family:'Liberation Sans';">Multiline</div>
<div class="t" style="left:-250px;width:600px;text-align:center;top:154.6px;font-size:13.6px;color:#e2e2e2;font-weight:400;font-family:'Liberation Sans';">Text</div>
<div class="t" style="left:85px;top:102.3px;font-size:7.5px;color:#8c8c8c;font-weight:700;font-family:'Liberation Sans';">ABC</div>
<div class="t" style="left:120px;top:102.6px;font-size:13.6px;color:#e2e2e2;font-weight:400;font-family:'Liberation Sans';">Standard</div>
<div class="t" style="left:136px;top:130.1px;font-size:13.6px;color:#e2e2e2;font-weight:400;font-family:'Liberation Sans';">Find...</div>
<div class="t" style="left:108px;top:157.1px;font-size:13.6px;color:#e2e2e2;font-weight:400;font-family:'Liberation Sans';">Text Styles...</div>
<div class="t" style="left:43.5px;width:600px;text-align:center;top:148.3px;font-size:13.6px;color:#e2e2e2;font-weight:400;font-family:'Liberation Sans';">Dimension</div>
<div class="t" style="left:393px;top:102.3px;font-size:13.6px;color:#e2e2e2;font-weight:400;font-family:'Liberation Sans';">ISO-25</div>
<div class="t" style="left:518px;top:131.3px;font-size:13.6px;color:#e2e2e2;font-weight:400;font-family:'Liberation Sans';">Flatshot</div>
<div class="t" style="left:407px;top:158.7px;font-size:13.6px;color:#e2e2e2;font-weight:400;font-family:'Liberation Sans';">Linear</div>
<div class="t" style="left:491px;top:158.7px;font-size:13.6px;color:#e2e2e2;font-weight:400;font-family:'Liberation Sans';">Quick</div>
<div class="t" style="left:559px;top:158.7px;font-size:13.6px;color:#e2e2e2;font-weight:400;font-family:'Liberation Sans';">Continue</div>
<div class="t" style="left:396.5px;width:600px;text-align:center;top:142.0px;font-size:13.6px;color:#e2e2e2;font-weight:400;font-family:'Liberation Sans';">Center</div>
<div class="t" style="left:396.5px;width:600px;text-align:center;top:154.6px;font-size:13.6px;color:#e2e2e2;font-weight:400;font-family:'Liberation Sans';">Mark</div>
<div class="t" style="left:449.5px;width:600px;text-align:center;top:142.0px;font-size:13.6px;color:#e2e2e2;font-weight:400;font-family:'Liberation Sans';">Center</div>
<div class="t" style="left:449.5px;width:600px;text-align:center;top:154.6px;font-size:13.6px;color:#e2e2e2;font-weight:400;font-family:'Liberation Sans';">Line</div>
<div class="t" style="left:520px;width:600px;text-align:center;top:148.3px;font-size:13.6px;color:#e2e2e2;font-weight:400;font-family:'Liberation Sans';">Multileader</div>
<div class="t" style="left:870px;top:102.6px;font-size:13.6px;color:#e2e2e2;font-weight:400;font-family:'Liberation Sans';">Standard</div>
<div class="t" style="left:913px;top:130.1px;font-size:13.6px;color:#e2e2e2;font-weight:400;font-family:'Liberation Sans';">Add Leader</div>
<div class="t" style="left:913px;top:156.9px;font-size:13.6px;color:#e2e2e2;font-weight:400;font-family:'Liberation Sans';">Remove Leader</div>
<div class="t" style="left:817px;width:600px;text-align:center;top:147.8px;font-size:13.6px;color:#e2e2e2;font-weight:400;font-family:'Liberation Sans';">Table...</div>
<div class="t" style="left:1171px;top:101.9px;font-size:13.6px;color:#e2e2e2;font-weight:400;font-family:'Liberation Sans';">Table Styles...</div>
<div class="t" style="left:1171px;top:129.0px;font-size:13.6px;color:#e2e2e2;font-weight:400;font-family:'Liberation Sans';">Data Extraction</div>
<div class="t" style="left:1171px;top:155.8px;font-size:13.6px;color:#e2e2e2;font-weight:400;font-family:'Liberation Sans';">Datalinks...</div>
<div class="t" style="left:1008px;width:600px;text-align:center;top:147.8px;font-size:13.6px;color:#e2e2e2;font-weight:400;font-family:'Liberation Sans';">Wipeout</div>
<div class="t" style="left:1067px;width:600px;text-align:center;top:142.0px;font-size:13.6px;color:#e2e2e2;font-weight:400;font-family:'Liberation Sans';">Revision</div>
<div class="t" style="left:1067px;width:600px;text-align:center;top:154.6px;font-size:13.6px;color:#e2e2e2;font-weight:400;font-family:'Liberation Sans';">Cloud</div>
<div class="t" style="left:1144px;width:600px;text-align:center;top:142.0px;font-size:13.6px;color:#e2e2e2;font-weight:400;font-family:'Liberation Sans';">Add Current</div>
<div class="t" style="left:1144px;width:600px;text-align:center;top:154.6px;font-size:13.6px;color:#e2e2e2;font-weight:400;font-family:'Liberation Sans';">Scale</div>
<div class="t" style="left:1512px;top:101.9px;font-size:13.6px;color:#e2e2e2;font-weight:400;font-family:'Liberation Sans';">Scale List</div>
<div class="t" style="left:1512px;top:129.0px;font-size:13.6px;color:#e2e2e2;font-weight:400;font-family:'Liberation Sans';">Add/Delete Scales</div>
<div class="t" style="left:1512px;top:155.8px;font-size:13.6px;color:#e2e2e2;font-weight:400;font-family:'Liberation Sans';">Sync Scale Positions</div>
<div class="t" style="left:13px;top:218.7px;font-size:12.5px;color:#cfcfcf;font-weight:400;font-family:'Liberation Sans';">Start</div>
<div class="t" style="left:86px;top:218.4px;font-size:13px;color:#f2f2f2;font-weight:700;font-family:'Liberation Sans';">Bell Crank Demo*</div>
<div class="t" style="left:1218.5px;top:274.1px;font-size:15px;color:#1f1f1f;font-weight:700;font-family:'Liberation Sans';">Bricsys</div>
<div class="t" style="left:1222px;top:294.6px;font-size:5px;color:#444;font-weight:400;font-family:'Liberation Sans';">part of Hexagon</div>
<div class="t" style="left:1199px;top:660.1px;font-size:10px;color:#151515;font-weight:700;font-family:'Liberation Sans';text-decoration:underline">DRAWING TITLE:</div>
<div class="t" style="left:1199px;top:684.1px;font-size:9.9px;color:#151515;font-weight:700;font-family:'Liberation Sans';">Bell Crank</div>
<div class="t" style="left:1199px;top:749.1px;font-size:10px;color:#151515;font-weight:700;font-family:'Liberation Sans';">DATE</div>
<div class="t" style="left:1199px;top:761.1px;font-size:10px;color:#151515;font-weight:700;font-family:'Liberation Sans';">25/02/2024</div>
<div class="t" style="left:1199px;top:791.1px;font-size:10px;color:#151515;font-weight:700;font-family:'Liberation Sans';">SCALE:</div>
<div class="t" style="left:1199px;top:803.1px;font-size:10px;color:#151515;font-weight:700;font-family:'Liberation Sans';">As specified</div>
<div class="t" style="left:1199px;top:837.8px;font-size:10px;color:#151515;font-weight:700;font-family:'Liberation Sans';text-decoration:underline">CLIENT</div>
<div class="t" style="left:1199px;top:849.1px;font-size:10px;color:#151515;font-weight:700;font-family:'Liberation Sans';">Bricsys BV</div>
<div class="t" style="left:1199px;top:926.8px;font-size:10px;color:#151515;font-weight:700;font-family:'Liberation Sans';">ENGINEER</div>
<div class="t" style="left:1199px;top:938.1px;font-size:10px;color:#151515;font-weight:700;font-family:'Liberation Sans';">M. Tooley</div>
<div class="t" style="left:1020.7px;top:550.7px;font-size:14.4px;color:#1c1c1c;font-weight:400;font-family:'Liberation Sans';">45°CHAMFER on edge</div>
<div class="t" style="left:1031.6px;top:624.8px;font-size:14.2px;color:#1c1c1c;font-weight:400;font-family:'Liberation Sans';">2mm Fillet rad</div>
<div class="t" style="left:686.6px;top:638.3px;font-size:14.2px;color:#1c1c1c;font-weight:400;font-family:'Liberation Sans';">5mm Fillet rad</div>
<div class="t" style="left:885px;top:814.5px;font-size:10.8px;color:#111;font-weight:700;font-family:'Liberation Sans';">Surface area of cast Bell Crank</div>
<div class="t" style="left:885px;top:827.6px;font-size:10.5px;color:#222;font-weight:400;font-family:'Liberation Sans';">777.73 cm<sup style="font-size:6px;vertical-align:4px">2</sup></div>
<div class="a" style="left:239px;top:975px;width:1070px;height:20px;background:#737275;"></div>
<div class="t" style="left:244px;top:950.1px;font-size:13px;color:#e8e8e8;font-weight:400;font-family:'Liberation Mono';">:</div>
<div class="t" style="left:259px;top:949.9px;font-size:13.4px;color:#f2f2f2;font-weight:400;font-family:'Liberation Mono';">_publish</div>
<div class="a" style="left:242px;top:978px;width:1px;height:14px;border-left:2px dotted #ccc"></div>
<div class="t" style="left:249px;top:979.1px;font-size:13px;color:#e0e0e0;font-weight:400;font-family:'Liberation Mono';">:</div>
<div class="t" style="left:265px;top:978.9px;font-size:13.5px;color:#b4b4b4;font-weight:400;font-family:'Liberation Mono';font-style:italic">Enter command</div>
<svg style="position:absolute;left:0;top:0" width="1920" height="1080"><path d="M1289 987.5 L1294.5 982 L1300 987.5 Z" fill="#f0f0f0"/></svg>
<div class="t" style="left:1561px;top:237.1px;font-size:12.6px;color:#e6e6e6;font-weight:400;font-family:'Liberation Sans';">No Selection</div>
<div class="t" style="left:1886px;top:436.7px;font-size:17px;color:#e8e8e8;font-weight:700;font-family:'Liberation Serif';"><i>f</i></div>
<div class="t" style="left:1894px;top:440.9px;font-size:10.5px;color:#e8e8e8;font-weight:400;font-family:'Liberation Serif';">(x)</div>
<div class="t" style="left:1570.5px;top:263.8px;font-size:13.6px;color:#f2f2f2;font-weight:700;font-family:'Liberation Sans';">General</div>
<div class="t" style="left:1572px;top:286.4px;width:78px;overflow:hidden;font-size:13px;color:#e2e2e2">Color</div>
<div class="t" style="left:1680px;top:286.4px;font-size:13px;color:#e2e2e2;font-weight:400;font-family:'Liberation Sans';">ByLayer</div>
<div class="t" style="left:1572px;top:308.9px;width:78px;overflow:hidden;font-size:13px;color:#e2e2e2">Layer</div>
<div class="t" style="left:1655px;top:308.9px;font-size:13px;color:#e2e2e2;font-weight:400;font-family:'Liberation Sans';">Flatshot</div>
<div class="t" style="left:1572px;top:331.4px;width:78px;overflow:hidden;font-size:13px;color:#e2e2e2">Linetype</div>
<div class="t" style="left:1772px;top:331.4px;font-size:13px;color:#e2e2e2;font-weight:400;font-family:'Liberation Sans';">ByLayer</div>
<div class="t" style="left:1572px;top:353.9px;width:78px;overflow:hidden;font-size:13px;color:#e2e2e2">Linetype scale</div>
<div class="t" style="left:1655px;top:353.9px;font-size:13px;color:#e2e2e2;font-weight:400;font-family:'Liberation Sans';">1</div>
<div class="t" style="left:1572px;top:376.4px;width:78px;overflow:hidden;font-size:13px;color:#e2e2e2">Lineweight</div>
<div class="t" style="left:1771px;top:376.4px;font-size:13px;color:#e2e2e2;font-weight:400;font-family:'Liberation Sans';">ByLayer</div>
<div class="t" style="left:1572px;top:398.9px;width:78px;overflow:hidden;font-size:13px;color:#e2e2e2">Transparency</div>
<div class="t" style="left:1655px;top:398.9px;font-size:13px;color:#e2e2e2;font-weight:400;font-family:'Liberation Sans';">ByLayer</div>
<div class="t" style="left:1572px;top:421.4px;width:78px;overflow:hidden;font-size:13px;color:#e2e2e2">Elevation</div>
<div class="t" style="left:1655px;top:421.4px;font-size:13px;color:#e2e2e2;font-weight:400;font-family:'Liberation Sans';">0 mm</div>
<div class="t" style="left:1570.5px;top:443.8px;font-size:13.6px;color:#f2f2f2;font-weight:700;font-family:'Liberation Sans';">View</div>
<div class="t" style="left:1572px;top:466.4px;width:78px;overflow:hidden;font-size:13px;color:#e2e2e2">Camera</div>
<div class="t" style="left:1655px;top:466.4px;font-size:13px;color:#e2e2e2;font-weight:400;font-family:'Liberation Sans';">0, 0, 1</div>
<div class="t" style="left:1572px;top:488.9px;width:78px;overflow:hidden;font-size:13px;color:#e2e2e2">Target</div>
<div class="t" style="left:1655px;top:488.9px;font-size:13px;color:#e2e2e2;font-weight:400;font-family:'Liberation Sans';">0, 0, 0</div>
<div class="t" style="left:1572px;top:511.4px;width:78px;overflow:hidden;font-size:13px;color:#e2e2e2">Perspective</div>
<div class="t" style="left:1655px;top:511.4px;font-size:13px;color:#e2e2e2;font-weight:400;font-family:'Liberation Sans';">Off</div>
<div class="t" style="left:1572px;top:533.9px;width:78px;overflow:hidden;font-size:13px;color:#e2e2e2">Lens length</div>
<div class="t" style="left:1655px;top:533.9px;font-size:13px;color:#e2e2e2;font-weight:400;font-family:'Liberation Sans';">50 mm</div>
<div class="t" style="left:1572px;top:556.4px;width:78px;overflow:hidden;font-size:13px;color:#e2e2e2">Field of view</div>
<div class="t" style="left:1655px;top:556.4px;font-size:13px;color:#e2e2e2;font-weight:400;font-family:'Liberation Sans';">38.58</div>
<div class="t" style="left:1572px;top:578.9px;width:78px;overflow:hidden;font-size:13px;color:#e2e2e2">Height</div>
<div class="t" style="left:1655px;top:578.9px;font-size:13px;color:#7a7c80;font-weight:400;font-family:'Liberation Sans';">297 mm</div>
<div class="t" style="left:1572px;top:601.4px;width:78px;overflow:hidden;font-size:13px;color:#e2e2e2">Width</div>
<div class="t" style="left:1655px;top:601.4px;font-size:13px;color:#7a7c80;font-weight:400;font-family:'Liberation Sans';">600.28 mm</div>
<div class="t" style="left:1572px;top:623.9px;width:78px;overflow:hidden;font-size:13px;color:#e2e2e2">Clipping</div>
<div class="t" style="left:1655px;top:623.9px;font-size:13px;color:#7a7c80;font-weight:400;font-family:'Liberation Sans';">Off</div>
<div class="t" style="left:1572px;top:646.4px;width:78px;overflow:hidden;font-size:13px;color:#e2e2e2">Front plane</div>
<div class="t" style="left:1655px;top:646.4px;font-size:13px;color:#7a7c80;font-weight:400;font-family:'Liberation Sans';">1 mm</div>
<div class="t" style="left:1572px;top:668.9px;width:78px;overflow:hidden;font-size:13px;color:#e2e2e2">Back plane</div>
<div class="t" style="left:1655px;top:668.9px;font-size:13px;color:#7a7c80;font-weight:400;font-family:'Liberation Sans';">0 mm</div>
<div class="t" style="left:1572px;top:691.4px;width:78px;overflow:hidden;font-size:13px;color:#e2e2e2">Visual style</div>
<div class="t" style="left:1655px;top:691.4px;font-size:13px;color:#7a7c80;font-weight:400;font-family:'Liberation Sans';">Shades of Gray</div>
<div class="t" style="left:1570.5px;top:713.8px;font-size:13.6px;color:#f2f2f2;font-weight:700;font-family:'Liberation Sans';">Misc</div>
<div class="t" style="left:1572px;top:736.4px;width:78px;overflow:hidden;font-size:13px;color:#e2e2e2">Annotation scale</div>
<div class="t" style="left:1655px;top:736.4px;font-size:13px;color:#7a7c80;font-weight:400;font-family:'Liberation Sans';">1:1</div>
<div class="t" style="left:1572px;top:758.9px;width:78px;overflow:hidden;font-size:13px;color:#e2e2e2">Default lighting</div>
<div class="t" style="left:1655px;top:758.9px;font-size:13px;color:#e2e2e2;font-weight:400;font-family:'Liberation Sans';">Off</div>
<div class="t" style="left:68px;top:1012.6px;font-size:13px;color:#c8c8c8;font-weight:400;font-family:'Liberation Sans';">Model</div>
<div class="t" style="left:124px;top:1012.8px;font-size:12.7px;color:#ececec;font-weight:400;font-family:'Liberation Sans';">Details sheet</div>
<div class="t" style="left:700px;top:1012.4px;font-size:12px;color:#d8d8d8;font-weight:400;font-family:'Liberation Sans';">389.14, 91.04, 0</div>
<div class="t" style="left:824px;top:1013.1px;font-size:12px;color:#e6e6e6;font-weight:400;font-family:'Liberation Sans';">None</div>
<div class="t" style="left:887px;top:1013.1px;font-size:12px;color:#5c5e62;font-weight:400;font-family:'Liberation Sans';">1:1</div>
<div class="t" style="left:966px;top:1013.2px;font-size:11.8px;color:#d8d8d8;font-weight:400;font-family:'Liberation Sans';">GRID</div>
<div class="t" style="left:1028px;top:1013.2px;font-size:11.8px;color:#d8d8d8;font-weight:400;font-family:'Liberation Sans';">SNAP</div>
<div class="t" style="left:1095px;top:1013.2px;font-size:11.8px;color:#d8d8d8;font-weight:400;font-family:'Liberation Sans';">ORTHO</div>
<div class="t" style="left:1170px;top:1013.2px;font-size:11.8px;color:#d8d8d8;font-weight:400;font-family:'Liberation Sans';">STRACK</div>
<div class="t" style="left:1251px;top:1013.2px;font-size:11.8px;color:#d8d8d8;font-weight:400;font-family:'Liberation Sans';">ESNAP</div>
<div class="t" style="left:1324.6px;top:1013.2px;font-size:11.8px;color:#d8d8d8;font-weight:400;font-family:'Liberation Sans';">DUCS</div>
<div class="t" style="left:1389.5px;top:1013.2px;font-size:11.8px;color:#d8d8d8;font-weight:400;font-family:'Liberation Sans';">DYN</div>
<div class="t" style="left:1448px;top:1013.2px;font-size:11.8px;color:#d8d8d8;font-weight:400;font-family:'Liberation Sans';">QUAD</div>
<div class="t" style="left:1523.7px;top:1013.2px;font-size:11.8px;color:#d8d8d8;font-weight:400;font-family:'Liberation Sans';">RT</div>
<div class="t" style="left:1571.8px;top:1013.2px;font-size:11.8px;color:#d8d8d8;font-weight:400;font-family:'Liberation Sans';">HIDE</div>
<div class="t" style="left:1633.8px;top:1013.2px;font-size:11.8px;color:#d8d8d8;font-weight:400;font-family:'Liberation Sans';">HKA</div>
<div class="t" style="left:1719.5px;top:1012.3px;font-size:13.6px;color:#e2e2e2;font-weight:400;font-family:'Liberation Sans';">Modeling</div>
</body></html>
